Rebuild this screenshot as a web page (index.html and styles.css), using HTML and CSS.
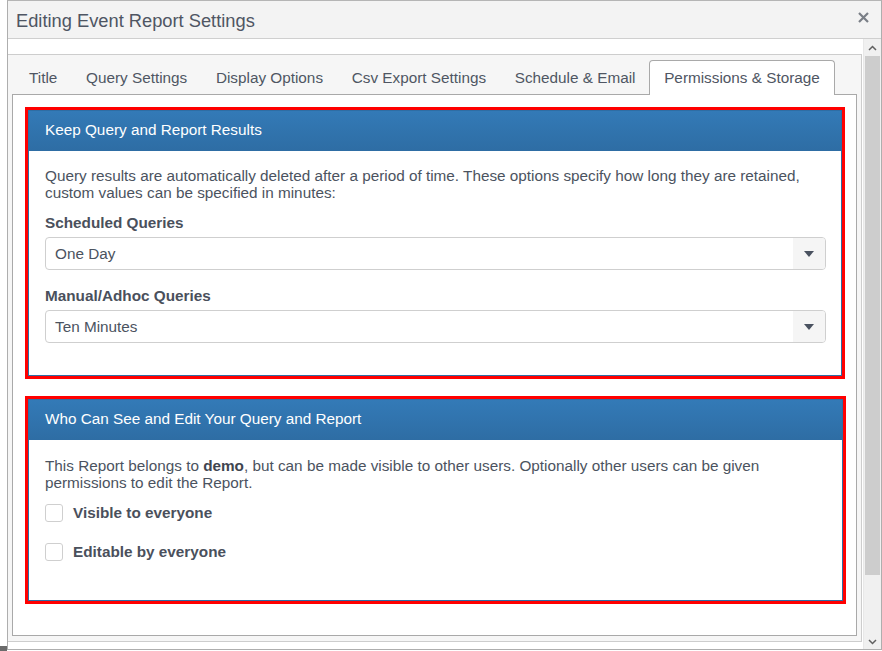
FILE: index.html
```html
<!DOCTYPE html>
<html>
<head>
<meta charset="utf-8">
<link rel="stylesheet" href="styles.css">
</head>
<body>
<div class="dialog">
  <div class="titlebar">
    <span class="title">Editing Event Report Settings</span>
    <svg class="close" width="11" height="11" viewBox="0 0 11 11"><path d="M1 1 L10 10 M10 1 L1 10" stroke="#7a7f87" stroke-width="2.2"/></svg>
  </div>
  <div class="main">
    <div class="content">
      <div class="tabs">
        <ul class="nav">
          <li class="tab">Title</li>
          <li class="tab">Query Settings</li>
          <li class="tab">Display Options</li>
          <li class="tab">Csv Export Settings</li>
          <li class="tab">Schedule &amp; Email</li>
          <li class="tab active">Permissions &amp; Storage</li>
        </ul>
        <div class="tabpanel">
          <div class="box first">
            <div class="panel">
              <div class="panel-heading">Keep Query and Report Results</div>
              <div class="panel-body body1">
                <p class="desc">Query results are automatically deleted after a period of time. These options specify how long they are retained, custom values can be specified in minutes:</p>
                <label class="lbl">Scheduled Queries</label>
                <div class="select"><span>One Day</span><span class="arrow"><svg width="10" height="6" viewBox="0 0 10 6"><path d="M0 0 H10 L5 6 Z" fill="#4a5260"/></svg></span></div>
                <label class="lbl lbl2">Manual/Adhoc Queries</label>
                <div class="select"><span>Ten Minutes</span><span class="arrow"><svg width="10" height="6" viewBox="0 0 10 6"><path d="M0 0 H10 L5 6 Z" fill="#4a5260"/></svg></span></div>
              </div>
            </div>
          </div>
          <div class="box second">
            <div class="panel">
              <div class="panel-heading">Who Can See and Edit Your Query and Report</div>
              <div class="panel-body body2">
                <p class="desc">This Report belongs to <b>demo</b>, but can be made visible to other users. Optionally other users can be given permissions to edit the Report.</p>
                <div class="check"><span class="cb"></span><span class="cl">Visible to everyone</span></div>
                <div class="check check2"><span class="cb"></span><span class="cl">Editable by everyone</span></div>
              </div>
            </div>
          </div>
        </div>
      </div>
    </div>
    <div class="scrollbar">
      <svg class="sb-up" width="9" height="6" viewBox="0 0 9 6"><path d="M1 5 L4.5 1.5 L8 5" fill="none" stroke="#606060" stroke-width="1.5"/></svg>
      <div class="thumb"></div>
      <div class="sb-space"></div>
      <svg class="sb-down" width="9" height="6" viewBox="0 0 9 6"><path d="M1 1 L4.5 4.5 L8 1" fill="none" stroke="#606060" stroke-width="1.5"/></svg>
    </div>
  </div>
</div>
<div class="corner"></div>
</body>
</html>
```
FILE: styles.css
```css
html, body {
  margin: 0;
  padding: 0;
  background: #fff;
}
body {
  font-family: "Liberation Sans", Arial, sans-serif;
  color: #4b5360;
  width: 882px;
  height: 651px;
  overflow: hidden;
  position: relative;
}
.dialog {
  margin-left: 7px;
  width: 875px;
  height: 650px;
  box-sizing: border-box;
  border: 1px solid #aeaeae;
  border-top-color: #b5b5b5;
  display: flex;
  flex-direction: column;
  background: #fff;
}
.titlebar {
  height: 38px;
  flex: none;
  box-sizing: border-box;
  background: #f3f3f3;
  border-bottom: 1px solid #cfcfcf;
  display: flex;
  align-items: center;
  padding-left: 8px;
  padding-right: 12px;
}
.title {
  font-size: 18.3px;
  flex: 1;
  color: #4f5663;
  position: relative;
  top: 1px;
}
.close {
  position: relative;
  top: -2px;
}
.main {
  flex: 1;
  display: flex;
  min-height: 0;
}
.content {
  flex: 1;
  padding-top: 15px;
  min-width: 0;
}
.tabs {
  background: #f6f6f6;
  border: 1px solid #cdcdcd;
  border-left: none;
  padding: 0 4px 5px 4px;
  margin-right: 1px;
}
.nav {
  list-style: none;
  margin: 0;
  padding: 0 0 0 2px;
  height: 39px;
  display: flex;
  align-items: flex-end;
}
.tab {
  font-size: 15.3px;
  color: #4f5663;
  padding: 0 12.7px 1px 14px;
  height: 34px;
  box-sizing: border-box;
  display: flex;
  align-items: center;
  border: 1px solid transparent;
  border-bottom: none;
  margin-bottom: -1px;
  position: relative;
}
.tab.active {
  background: #fff;
  border-color: #a9a9a9;
  border-radius: 4px 4px 0 0;
  height: 35px;
  padding: 0 14px 1px 14px;
  margin-left: 0;
  z-index: 1;
}
.tabpanel {
  background: #fff;
  border: 1px solid #a9a9a9;
  padding: 12px 11px 31px 12px;
}
.box {
  border: 3px solid #ff0000;
}
.box.second {
  margin-top: 17px;
  margin-right: -1px;
}
.panel {
  border: 1px solid #2e6da4;
}
.panel-heading {
  height: 40px;
  box-sizing: border-box;
  background: linear-gradient(#337ab7, #2e6da4);
  color: #fff;
  font-size: 15.3px;
  padding-left: 16px;
  padding-bottom: 3px;
  display: flex;
  align-items: center;
}
.panel-body {
  padding: 16px 15px 32px 16px;
  font-size: 15.3px;
}
.desc {
  margin: 0;
  line-height: 17px;
}
.desc b {
  color: #3f4550;
}
.lbl {
  display: block;
  font-weight: bold;
  line-height: 17px;
  margin-top: 13px;
  margin-bottom: 6px;
  color: #4a505c;
}
.lbl2 {
  margin-top: 17px;
}
.select {
  height: 33px;
  box-sizing: border-box;
  border: 1px solid #cfcfcf;
  border-radius: 4px;
  display: flex;
  align-items: center;
  padding-left: 9px;
  overflow: hidden;
  color: #4b5360;
}
.select span:first-child {
  flex: 1;
}
.arrow {
  width: 32px;
  height: 100%;
  background: #f5f5f5;
  display: flex;
  align-items: center;
  justify-content: center;
}
.body2 {
  padding-top: 17px;
  padding-bottom: 39px;
}
.check {
  display: flex;
  align-items: center;
  height: 18px;
  margin-top: 13px;
}
.check2 {
  margin-top: 21px;
}
.cb {
  width: 16px;
  height: 16px;
  border: 1px solid #cfcfcf;
  border-radius: 3px;
  background: #fff;
  margin-right: 10px;
}
.cl {
  font-weight: bold;
  color: #4a505c;
}
.scrollbar {
  width: 17px;
  flex: none;
  background: #f0f0f0;
  display: flex;
  flex-direction: column;
  align-items: center;
  border-left: 1px solid #e8e8e8;
}
.sb-up {
  margin-top: 6px;
  flex: none;
}
.thumb {
  width: 15px;
  height: 519px;
  background: #cdcdcd;
  margin-top: 5px;
  flex: none;
}
.sb-space {
  flex: 1;
}
.sb-down {
  margin-bottom: 4px;
  flex: none;
}
.corner {
  position: absolute;
  left: 0;
  top: 646px;
  width: 7px;
  height: 5px;
  background: #6b6b6b;
}
```
